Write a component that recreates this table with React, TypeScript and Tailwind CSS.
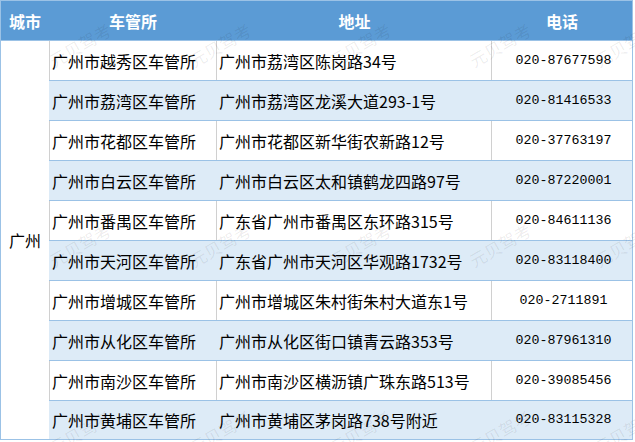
import React from "react";

const rows: [string, string, string][] = [
  ["广州市越秀区车管所", "广州市荔湾区陈岗路34号", "020-87677598"],
  ["广州市荔湾区车管所", "广州市荔湾区龙溪大道293-1号", "020-81416533"],
  ["广州市花都区车管所", "广州市花都区新华街农新路12号", "020-37763197"],
  ["广州市白云区车管所", "广州市白云区太和镇鹤龙四路97号", "020-87220001"],
  ["广州市番禺区车管所", "广东省广州市番禺区东环路315号", "020-84611136"],
  ["广州市天河区车管所", "广东省广州市天河区华观路1732号", "020-83118400"],
  ["广州市增城区车管所", "广州市增城区朱村街朱村大道东1号", "020-2711891"],
  ["广州市从化区车管所", "广州市从化区街口镇青云路353号", "020-87961310"],
  ["广州市南沙区车管所", "广州市南沙区横沥镇广珠东路513号", "020-39085456"],
  ["广州市黄埔区车管所", "广州市黄埔区茅岗路738号附近", "020-83115328"],
];

const cjk = { fontFamily: '"Noto Sans CJK SC", sans-serif' };
const mono = { fontFamily: '"Liberation Mono", "Noto Sans CJK SC", monospace' };

const marks: { x: number; y: number }[] = [];
for (const y of [45, 245, 432]) {
  for (const x of [80, 220, 360, 500, 625]) marks.push({ x, y });
}

export default function App() {
  return (
    <div className="relative w-[635px] h-[442px] bg-white overflow-hidden" style={cjk}>
      <div className="w-[633px] border border-[#9bc2e6] flex flex-col">
        <div className="flex h-[40px] bg-[#5b9bd5] border-b border-[#9bc2e6] text-white font-bold text-[16px]">
          <div className="w-[48px] flex items-center justify-center">城市</div>
          <div className="w-[168px] flex items-center justify-center">车管所</div>
          <div className="w-[275px] flex items-center justify-center">地址</div>
          <div className="w-[140px] flex items-center justify-center">电话</div>
        </div>
        <div className="flex">
          <div className="w-[48px] flex items-center justify-center text-[16px] text-black">广州</div>
          <div className="flex flex-col w-[583px]">
            {rows.map((r, i) => {
              const blue = i % 2 === 1;
              const last = i === rows.length - 1;
              const bc = blue ? "border-[#ddebf7]" : "border-[#d0d0d0]";
              return (
                <div
                  key={i}
                  className={`flex ${last ? "h-[38px]" : "h-[40px] border-b border-b-[#9bc2e6]"} ${
                    blue ? "bg-[#ddebf7]" : "bg-white"
                  } text-[16px] text-black`}
                >
                  <div className={`w-[167px] border-l ${bc} flex items-center pl-[2px] whitespace-nowrap`}>{r[0]}</div>
                  <div className={`w-[275px] border-l ${bc} flex items-center pl-[2px] whitespace-nowrap`}>{r[1]}</div>
                  <div className={`w-[141px] border-l ${bc} flex items-center justify-center pl-[3px] text-[13.3px]`} style={mono}>
                    {r[2]}
                  </div>
                </div>
              );
            })}
          </div>
        </div>
      </div>
      {marks.map((m, i) => (
        <div
          key={i}
          className="absolute pointer-events-none text-[17px] text-black/[0.08] whitespace-nowrap"
          style={{ left: m.x, top: m.y, transform: "translate(-50%, -50%) rotate(-30deg)" }}
        >
          元贝驾考
        </div>
      ))}
    </div>
  );
}
